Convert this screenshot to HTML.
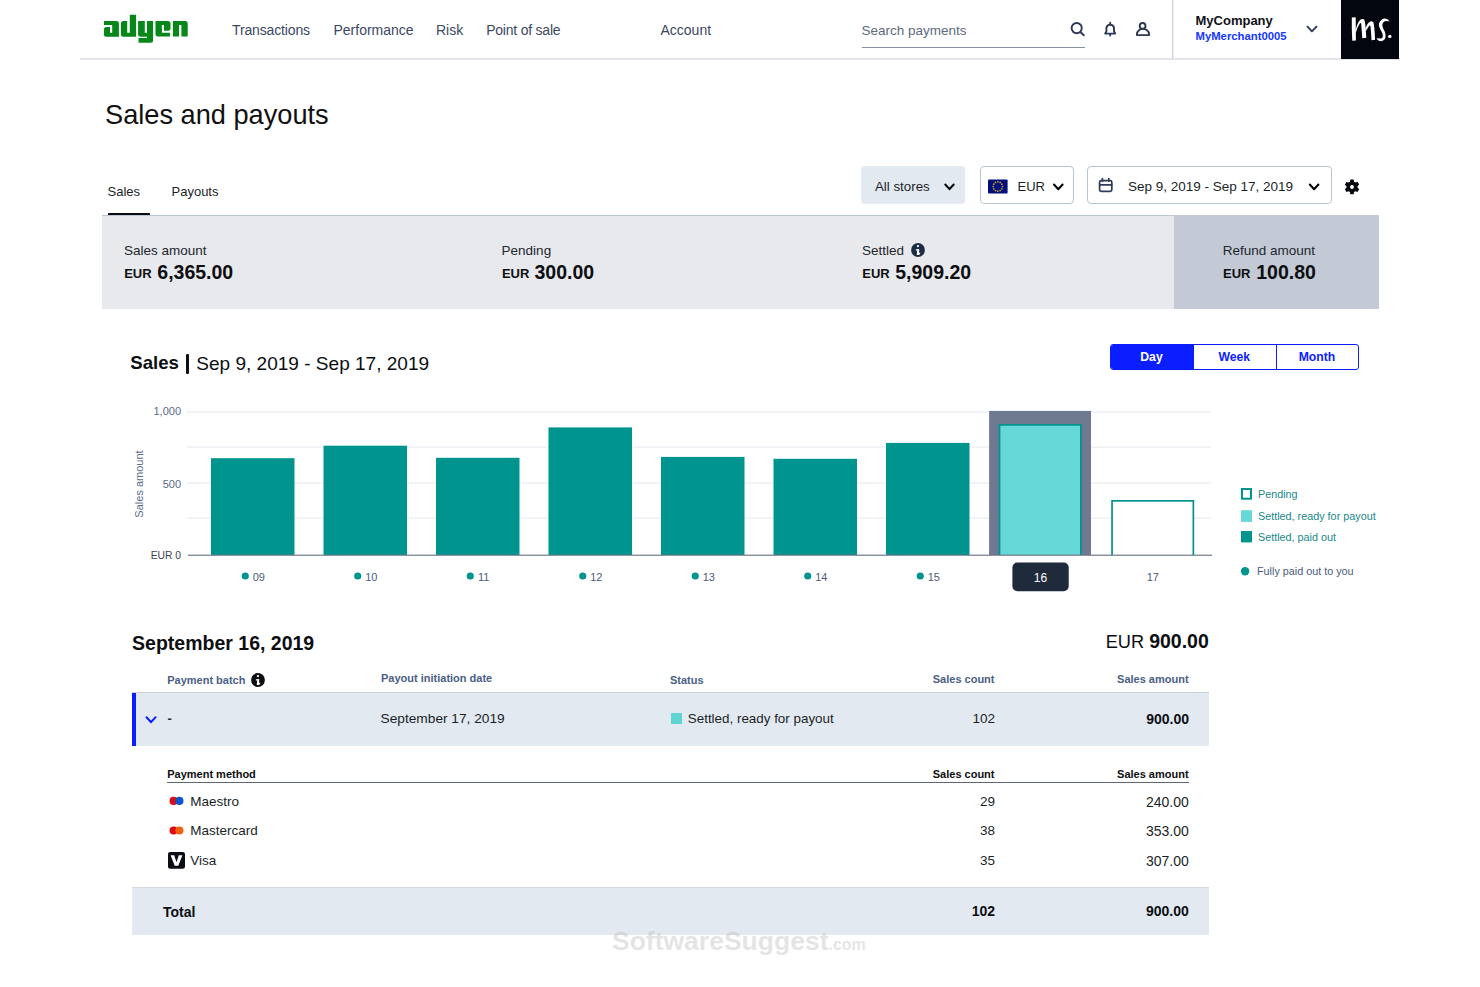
<!DOCTYPE html>
<html><head><meta charset="utf-8">
<style>
html,body{margin:0;padding:0;background:#fff;width:1480px;height:987px;overflow:hidden;position:relative}
body{font-family:"Liberation Sans",sans-serif;color:#111}
.t{position:absolute;white-space:nowrap;line-height:1}
.r{text-align:right}
.b{font-weight:700}
.box{position:absolute}
svg{position:absolute;overflow:visible}
.nav{font-size:14px;color:#3b4863;top:22.5px}
</style></head><body>

<!-- HEADER -->
<svg style="left:0;top:0" width="1480" height="60">
  <g fill="#06871a">
    <!-- a -->
    <path d="M104 21h12.5q2.4 0 2.4 2.4V36.7H106.4q-2.5 0 -2.5 -2.5V29.5q0 -2.5 2.5 -2.5H110V32.7H112.2V25H104Z"/>
    <!-- d -->
    <path d="M129.8 14.8H136.1V36.7H123.4q-2.5 0 -2.5 -2.5V23.4q0 -2.5 2.5 -2.5H127.2V32.7H129.8Z"/>
    <!-- y -->
    <path d="M138.1 20.9H144.8V32.7H147V20.9H153.1V40.3q0 2.5 -2.5 2.5H138.5V38.1H147V36.7H140.6q-2.5 0 -2.5 -2.5Z"/>
    <!-- e -->
    <path d="M155.5 21H168q2.5 0 2.5 2.5V28.3q0 2.5 -2.5 2.5H164V24.9H161.9V32.7H170V36.5H158q-2.5 0 -2.5 -2.5Z"/>
    <!-- n -->
    <path d="M172.9 21H185.2q2.5 0 2.5 2.5V36.5H181.4V25H179V36.5H172.9Z"/>
  </g>
  <rect x="80" y="58.3" width="1320" height="1.5" fill="#d9dde5"/>
  <rect x="1172.2" y="0" width="1.1" height="58.5" fill="#c6cbd6"/>
</svg>

<div class="t nav" style="left:232px;letter-spacing:-0.14px">Transactions</div>
<div class="t nav" style="left:333.5px">Performance</div>
<div class="t nav" style="left:436px">Risk</div>
<div class="t nav" style="left:486.2px;letter-spacing:-0.22px">Point of sale</div>
<div class="t nav" style="left:660.5px">Account</div>

<div class="t" style="left:861.5px;top:23.5px;font-size:13.5px;color:#5d6a80">Search payments</div>
<div class="box" style="left:862px;top:46.6px;width:222.8px;height:1.5px;background:#8591a6"></div>

<svg style="left:0;top:0" width="1480" height="60" fill="none" stroke="#2c3a56" stroke-width="1.9" stroke-linecap="round" stroke-linejoin="round">
  <circle cx="1076.7" cy="28.1" r="5.1"/>
  <path d="M1080.6 32.2L1083.8 35.3"/>
  <path d="M1105.2 33.6H1115.2L1114 31.6V27.8A3.9 3.9 0 0 0 1106.4 27.8V31.6Z"/>
  <path d="M1110.2 22.8V23.6M1110.2 34.4V35.6"/>
  <circle cx="1142.6" cy="25.9" r="2.9"/>
  <path d="M1136.9 35.1H1149.1V34.2A6.1 5.3 0 0 0 1136.9 34.2Z"/>
  <path d="M1307.5 26.7L1311.9 31.3L1316.5 26.7"/>
</svg>

<div class="t b" style="left:1195.5px;top:14.3px;font-size:13px;color:#0f1218">MyCompany</div>
<div class="t b" style="left:1195.5px;top:30.5px;font-size:11.3px;color:#1538ff">MyMerchant0005</div>

<div class="box" style="left:1341.2px;top:0;width:58.3px;height:58.5px;background:#03060e"></div>
<svg style="left:0;top:0" width="1480" height="60" fill="#fff" stroke="none">
  <path d="M1351.8 17.6L1355.7 17.2L1355.9 40.4L1352.3 40.8Q1351.6 30 1351.8 17.6Z"/>
  <path d="M1355.4 30.2Q1357.8 21.4 1360.6 19.4Q1362.6 18.4 1364.2 19.6Q1365.4 21.5 1366.3 37.8L1362.3 38.2Q1361.6 29 1361.2 23.6Q1360.6 22.6 1359.8 23.6Q1357.4 27 1355.6 33.4Z"/>
  <path d="M1365.4 28.4Q1367.6 22.6 1370.2 21.4Q1372.4 20.8 1373.4 22.6Q1374.4 25 1375.1 39.8L1371.5 40.2Q1371.1 32 1370.5 26.2Q1370 25 1369.1 26Q1367.4 28.2 1365.6 31.6Z"/>
  <path d="M1389.6 21.6Q1387.6 18.2 1384.4 18.6Q1380.6 19.4 1379 23.6Q1378.2 26.4 1380.4 29.6Q1382.8 33 1382.9 36.2Q1382.6 38.8 1380.2 38.6Q1378.4 38.2 1376.6 38.2Q1377.8 41.2 1381.2 41.2Q1385.6 40.8 1385.6 35.6Q1385.4 31.6 1383.2 28.4Q1381.8 26 1382.6 23.4Q1383.8 21 1386.4 21Q1388.2 21.2 1389.6 21.6Z"/>
  <circle cx="1389.8" cy="36.4" r="1.7"/>
</svg>

<!-- TITLE -->
<div class="t" style="left:105px;top:101.2px;font-size:27.2px;color:#111">Sales and payouts</div>

<!-- TABS -->
<div class="t" style="left:107.5px;top:184.9px;font-size:13px;color:#1b1f27">Sales</div>
<div class="t" style="left:171.5px;top:184.9px;font-size:13px;color:#1b1f27">Payouts</div>
<div class="box" style="left:107.8px;top:212.6px;width:42.2px;height:3px;border-radius:1px;background:#0b0d12"></div>

<!-- FILTERS -->
<div class="box" style="left:861px;top:166.3px;width:103.6px;height:38px;border-radius:4px;background:#e3e9f1"></div>
<div class="t" style="left:875px;top:179.8px;font-size:13.3px;color:#1b1f27">All stores</div>
<div class="box" style="left:980px;top:166.2px;width:94.4px;height:38.2px;box-sizing:border-box;border:1px solid #b9c3cf;border-radius:4px;background:#fff"></div>
<div class="t" style="left:1017.5px;top:179.7px;font-size:13px;color:#1b1f27">EUR</div>
<div class="box" style="left:1087.2px;top:166.2px;width:245px;height:37.6px;box-sizing:border-box;border:1px solid #b9c3cf;border-radius:4px;background:#fff"></div>
<div class="t" style="left:1128px;top:180.4px;font-size:13.5px;color:#1b1f27">Sep 9, 2019 - Sep 17, 2019</div>

<svg style="left:0;top:0" width="1480" height="220" fill="none" stroke-linecap="round" stroke-linejoin="round">
  <path d="M945.3 184.5L949.5 189.2L953.7 184.5" stroke="#000" stroke-width="2"/>
  <path d="M1054 184.5L1058.3 189.2L1062.6 184.5" stroke="#000" stroke-width="2"/>
  <path d="M1309.8 184.5L1314.1 189.2L1318.4 184.5" stroke="#000" stroke-width="2"/>
  <rect x="988" y="179.4" width="19.6" height="14" rx="1" fill="#03107a" stroke="none"/>
  <g fill="#d1a129" stroke="none">
    <circle cx="997.8" cy="181.8" r="0.85"/><circle cx="1000.15" cy="182.43" r="0.85"/><circle cx="1001.87" cy="184.15" r="0.85"/>
    <circle cx="1002.5" cy="186.5" r="0.85"/><circle cx="1001.87" cy="188.85" r="0.85"/><circle cx="1000.15" cy="190.57" r="0.85"/>
    <circle cx="997.8" cy="191.2" r="0.85"/><circle cx="995.45" cy="190.57" r="0.85"/><circle cx="993.73" cy="188.85" r="0.85"/>
    <circle cx="993.1" cy="186.5" r="0.85"/><circle cx="993.73" cy="184.15" r="0.85"/><circle cx="995.45" cy="182.43" r="0.85"/>
  </g>
  <g stroke="#2f3d58" stroke-width="1.75">
    <rect x="1099.6" y="180.6" width="12.2" height="10.8" rx="1.6"/>
    <path d="M1099.8 184.9H1111.6M1102.4 178.6V181M1108.8 178.6V181"/>
  </g>
</svg>
<svg style="left:1343.5px;top:178.9px" width="16" height="16" viewBox="0 0 24 24">
  <path fill="#05070c" fill-rule="evenodd" d="M9.6 0.8h4.8l0.8 3.2 1.9 1.1 3.2-0.9 2.4 4.2-2.4 2.3v2.2l2.4 2.3-2.4 4.2-3.2-0.9-1.9 1.1-0.8 3.2H9.6l-0.8-3.2-1.9-1.1-3.2 0.9-2.4-4.2 2.4-2.3V10.9L1.3 8.6l2.4-4.2 3.2 0.9 1.9-1.1Z M12 9.1a2.9 2.9 0 1 0 0.01 0Z"/>
</svg>

<!-- STATS -->
<div class="box" style="left:102px;top:214.5px;width:1072px;height:94.4px;background:#e8e9ed;border-top:1px solid #bcc6d2;box-sizing:border-box"></div>
<div class="box" style="left:1174px;top:214.5px;width:205.2px;height:94.4px;background:#c4cad5"></div>

<div class="t" style="left:124px;top:243.5px;font-size:13.5px;color:#22262e">Sales amount</div>
<div class="t b" style="left:124.2px;top:267px;font-size:13px;color:#0c0e12">EUR</div>
<div class="t b" style="left:157.3px;top:262.5px;font-size:19.5px;color:#0c0e12">6,365.00</div>

<div class="t" style="left:501.6px;top:243.5px;font-size:13.5px;color:#22262e">Pending</div>
<div class="t b" style="left:501.9px;top:267px;font-size:13px;color:#0c0e12">EUR</div>
<div class="t b" style="left:534.5px;top:262.5px;font-size:19.5px;color:#0c0e12">300.00</div>

<div class="t" style="left:862px;top:243.5px;font-size:13.5px;color:#22262e">Settled</div>
<svg style="left:910.8px;top:242.8px" width="14" height="14" viewBox="0 0 14 14">
  <circle cx="7" cy="7" r="6.9" fill="#1d2b46"/>
  <circle cx="6.95" cy="3.1" r="1.15" fill="#fff"/>
  <path d="M4.9 6.2L8.2 5.9L8.1 10.1L9.4 9.6L8.7 11.5Q7.8 12.2 6.5 12.1L5.7 11.7L6.2 7.5L4.9 7.6Z" fill="#fff"/>
</svg>
<div class="t b" style="left:862.3px;top:267px;font-size:13px;color:#0c0e12">EUR</div>
<div class="t b" style="left:895.2px;top:262.5px;font-size:19.5px;color:#0c0e12">5,909.20</div>

<div class="t" style="left:1222.8px;top:243.7px;font-size:13.5px;color:#22262e">Refund amount</div>
<div class="t b" style="left:1223px;top:267px;font-size:13px;color:#0c0e12">EUR</div>
<div class="t b" style="left:1256.2px;top:262.5px;font-size:19.5px;color:#0c0e12">100.80</div>

<!--CHART-->
<div class="t b" style="left:130.3px;top:354.4px;font-size:18.6px;color:#0c0e12">Sales</div>
<div class="box" style="left:186.3px;top:354.3px;width:2.4px;height:19.5px;border-radius:1.2px;background:#0c0e12"></div>
<div class="t" style="left:196.3px;top:353.8px;font-size:19.05px;color:#0c0e12">Sep 9, 2019 - Sep 17, 2019</div>
<div class="box" style="left:1110px;top:344px;width:248.8px;height:25.7px;border:1.3px solid #0a1eff;border-radius:3px;box-sizing:border-box;overflow:hidden;background:#fff"><div class="box" style="left:0;top:0;width:82px;height:100%;background:#0a1eff"></div><div class="box" style="left:164.5px;top:0;width:1.2px;height:100%;background:#0a1eff"></div><div class="box" style="left:82px;top:0;width:1.2px;height:100%;background:#0a1eff"></div></div>
<div class="t b" style="left:1110px;width:83px;text-align:center;top:351.1px;font-size:12.2px;color:#fff">Day</div>
<div class="t b" style="left:1193px;width:82.5px;text-align:center;top:351.1px;font-size:12.2px;color:#0a1eff">Week</div>
<div class="t b" style="left:1275.5px;width:83px;text-align:center;top:351.1px;font-size:12.2px;color:#0a1eff">Month</div>
<svg style="left:0;top:0" width="1480" height="987">
<rect x="187" y="411.5" width="1024" height="1.1" fill="#e6eaf0"/>
<rect x="187" y="446.5" width="1024" height="1.1" fill="#e6eaf0"/>
<rect x="187" y="482.5" width="1024" height="1.1" fill="#e6eaf0"/>
<rect x="187" y="517.5" width="1024" height="1.1" fill="#e6eaf0"/>
<rect x="989.1" y="410.9" width="101.9" height="144.1" fill="#6f7a91"/>
<rect x="211.0" y="458.2" width="83.5" height="96.80000000000001" fill="#00948f"/>
<rect x="323.5" y="445.7" width="83.5" height="109.30000000000001" fill="#00948f"/>
<rect x="436.0" y="457.8" width="83.5" height="97.19999999999999" fill="#00948f"/>
<rect x="548.5" y="427.4" width="83.5" height="127.60000000000002" fill="#00948f"/>
<rect x="661.0" y="456.9" width="83.5" height="98.10000000000002" fill="#00948f"/>
<rect x="773.5" y="458.8" width="83.5" height="96.19999999999999" fill="#00948f"/>
<rect x="886.0" y="442.9" width="83.5" height="112.10000000000002" fill="#00948f"/>
<rect x="998.7" y="424" width="83" height="131" fill="#00938f"/><rect x="1000.4" y="425.7" width="79.6" height="129.3" fill="#66d8d8"/>
<rect x="1111.2" y="500" width="83" height="55" fill="#00938f"/><rect x="1112.9" y="501.7" width="79.6" height="53.3" fill="#fff"/>
<rect x="188" y="554.6" width="1024" height="1.2" fill="#6f788b"/>
<circle cx="245.25" cy="576" r="3.6" fill="#00948f"/>
<circle cx="357.75" cy="576" r="3.6" fill="#00948f"/>
<circle cx="470.25" cy="576" r="3.6" fill="#00948f"/>
<circle cx="582.75" cy="576" r="3.6" fill="#00948f"/>
<circle cx="695.25" cy="576" r="3.6" fill="#00948f"/>
<circle cx="807.75" cy="576" r="3.6" fill="#00948f"/>
<circle cx="920.25" cy="576" r="3.6" fill="#00948f"/>
<rect x="1012.4" y="562.6" width="56.3" height="28.6" rx="5" fill="#1f2a3c"/>
<rect x="1242" y="489" width="9" height="9.7" fill="none" stroke="#00938f" stroke-width="2"/>
<rect x="1241" y="510.2" width="11" height="11.7" fill="#66d8d8"/>
<rect x="1241" y="531" width="11" height="11.4" fill="#00948f"/>
<circle cx="1245.1" cy="571.3" r="4.2" fill="#00948f"/>
</svg>
<div class="t r" style="left:120px;width:61px;top:405.8px;font-size:11px;color:#5b6b8c">1,000</div>
<div class="t r" style="left:120px;width:61px;top:478.8px;font-size:11px;color:#5b6b8c">500</div>
<div class="t r" style="left:120px;width:61px;top:551px;font-size:10.3px;color:#3b4252">EUR 0</div>
<div class="t" style="left:139.3px;top:484.2px;font-size:11px;color:#5b6b8c;transform:translate(-50%,-50%) rotate(-90deg);">Sales amount</div>
<div class="t" style="left:221.25px;width:75px;text-align:center;top:571.5px;font-size:11px;color:#4b5b7c">09</div>
<div class="t" style="left:333.75px;width:75px;text-align:center;top:571.5px;font-size:11px;color:#4b5b7c">10</div>
<div class="t" style="left:446.25px;width:75px;text-align:center;top:571.5px;font-size:11px;color:#4b5b7c">11</div>
<div class="t" style="left:558.75px;width:75px;text-align:center;top:571.5px;font-size:11px;color:#4b5b7c">12</div>
<div class="t" style="left:671.25px;width:75px;text-align:center;top:571.5px;font-size:11px;color:#4b5b7c">13</div>
<div class="t" style="left:783.75px;width:75px;text-align:center;top:571.5px;font-size:11px;color:#4b5b7c">14</div>
<div class="t" style="left:896.25px;width:75px;text-align:center;top:571.5px;font-size:11px;color:#4b5b7c">15</div>
<div class="t" style="left:1012.4px;width:56.3px;text-align:center;top:572px;font-size:12px;color:#fff">16</div>
<div class="t" style="left:1115.25px;width:75px;text-align:center;top:571.5px;font-size:11px;color:#4b5b7c">17</div>
<div class="t" style="left:1258px;top:488.5px;font-size:10.8px;color:#18898a">Pending</div>
<div class="t" style="left:1258px;top:511.3px;font-size:10.8px;color:#18898a">Settled, ready for payout</div>
<div class="t" style="left:1258px;top:532.3px;font-size:10.8px;color:#18898a">Settled, paid out</div>
<div class="t" style="left:1257px;top:565.8px;font-size:10.8px;color:#4a5a80">Fully paid out to you</div>

<!--DETAIL-->
<div class="t b" style="left:132.1px;top:634.2px;font-size:19.5px;color:#0c0e12">September 16, 2019</div>
<div class="t r" style="left:900px;width:308.8px;top:631.5px;font-size:18.2px;color:#0c0e12">EUR <span class="b" style="font-size:19.5px">900.00</span></div>
<div class="t b" style="left:167.2px;top:674.7px;font-size:11px;color:#4a6086">Payment batch</div>
<svg style="left:251px;top:673.0px" width="14" height="14" viewBox="0 0 14 14"><circle cx="7" cy="7" r="6.9" fill="#0c0e12"/><circle cx="6.95" cy="3.1" r="1.15" fill="#fff"/><path d="M4.9 6.2L8.2 5.9L8.1 10.1L9.4 9.6L8.7 11.5Q7.8 12.2 6.5 12.1L5.7 11.7L6.2 7.5L4.9 7.6Z" fill="#fff"/></svg>
<div class="t b" style="left:381px;top:672.8px;font-size:11px;color:#4a6086">Payout initiation date</div>
<div class="t b" style="left:670px;top:675.1px;font-size:11px;color:#4a6086">Status</div>
<div class="t b r" style="left:794.5px;width:200px;top:674.3px;font-size:11px;color:#4a6086">Sales count</div>
<div class="t b r" style="left:988.6px;width:200px;top:674.3px;font-size:11px;color:#4a6086">Sales amount</div>
<div class="box" style="left:132px;top:691.6px;width:1077px;height:1.2px;background:#c9ced6"></div>
<div class="box" style="left:132px;top:692.8px;width:1077px;height:53px;background:#e3e9f1"></div>
<div class="box" style="left:132px;top:692.8px;width:4px;height:53px;background:#0a1eff"></div>
<svg style="left:0;top:0" width="1480" height="987" fill="none" stroke-linecap="round" stroke-linejoin="round"><path d="M146.5 717.2L151.1 722.2L155.6 717.2" stroke="#0a1eff" stroke-width="2"/></svg>
<div class="t b" style="left:167.6px;top:712.4px;font-size:13px;color:#2a2e36">-</div>
<div class="t" style="left:380.6px;top:712.0px;font-size:13.7px;color:#1b1f27">September 17, 2019</div>
<div class="box" style="left:671.4px;top:713.4px;width:10.8px;height:10.8px;background:#5fd4d3"></div>
<div class="t" style="left:687.8px;top:712.0px;font-size:13.4px;color:#1b1f27">Settled, ready for payout</div>
<div class="t r" style="left:795px;width:200px;top:712.0px;font-size:13.5px;color:#1b1f27">102</div>
<div class="t b r" style="left:989px;width:200px;top:711.6px;font-size:14px;color:#0c0e12">900.00</div>
<div class="t b" style="left:167.2px;top:769px;font-size:11px;color:#0c0e12">Payment method</div>
<div class="t b r" style="left:794.5px;width:200px;top:768.8px;font-size:11px;color:#0c0e12">Sales count</div>
<div class="t b r" style="left:988.6px;width:200px;top:768.8px;font-size:11px;color:#0c0e12">Sales amount</div>
<div class="box" style="left:167.2px;top:782px;width:1021.4px;height:1.3px;background:#60667a"></div>
<div class="t" style="left:190.3px;top:794.5px;font-size:13.5px;color:#1b1f27">Maestro</div>
<div class="t r" style="left:795px;width:200px;top:794.5px;font-size:13.5px;color:#1b1f27">29</div>
<div class="t r" style="left:988.8px;width:200px;top:794.5px;font-size:14px;color:#1b1f27">240.00</div>
<div class="t" style="left:190.3px;top:824.0px;font-size:13.5px;color:#1b1f27">Mastercard</div>
<div class="t r" style="left:795px;width:200px;top:824.0px;font-size:13.5px;color:#1b1f27">38</div>
<div class="t r" style="left:988.8px;width:200px;top:824.0px;font-size:14px;color:#1b1f27">353.00</div>
<div class="t" style="left:190.3px;top:853.8px;font-size:13.5px;color:#1b1f27">Visa</div>
<div class="t r" style="left:795px;width:200px;top:853.8px;font-size:13.5px;color:#1b1f27">35</div>
<div class="t r" style="left:988.8px;width:200px;top:853.8px;font-size:14px;color:#1b1f27">307.00</div>
<svg style="left:0;top:0" width="1480" height="987"><circle cx="173.6" cy="800.9" r="4.1" fill="#dc0a14"/><circle cx="179.4" cy="800.9" r="4.1" fill="#0a55cc"/><circle cx="173.6" cy="830.5" r="4.1" fill="#dc0a14"/><circle cx="179.4" cy="830.5" r="4.1" fill="#f0620f"/><rect x="168" y="852" width="17" height="16.8" rx="2.2" fill="#0a0d14"/><path d="M170.6 855.2H174.2L176.5 862.2L178.8 855.2H182.4L178.3 865.8H174.7Z" fill="#fff"/></svg>
<div class="box" style="left:132px;top:887px;width:1077px;height:47.5px;background:#e3e9f1;border-top:1px solid #d3dae3;box-sizing:border-box"></div>
<div class="t b" style="left:163px;top:904.7px;font-size:14px;color:#0c0e12">Total</div>
<div class="t b r" style="left:795px;width:200px;top:904.3px;font-size:14px;color:#0c0e12">102</div>
<div class="t b r" style="left:988.8px;width:200px;top:904.3px;font-size:14px;color:#0c0e12">900.00</div>
<div class="t b" style="left:612px;top:927.8px;font-size:26.5px;color:rgba(185,185,185,0.38)">SoftwareSuggest<span style="font-size:16px">.com</span></div>

</body></html>
